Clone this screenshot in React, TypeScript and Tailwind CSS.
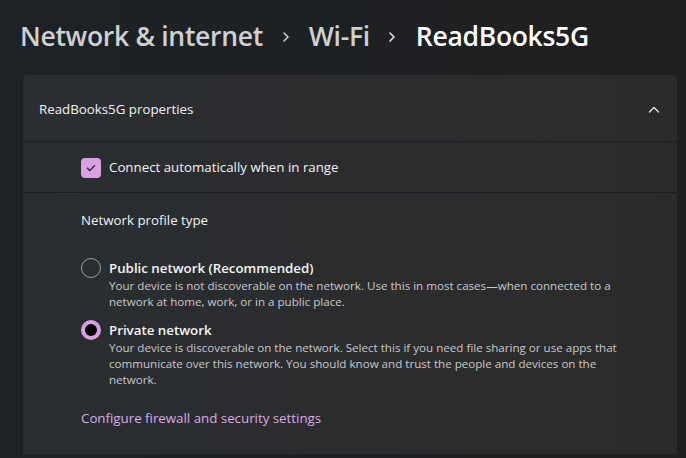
import React from "react";

const Chevron = ({ className }: { className?: string }) => (
  <svg viewBox="0 0 16 16" className={className} fill="none" stroke="currentColor" strokeWidth="1.6" strokeLinecap="round" strokeLinejoin="round">
    <path d="M6 4l4 4-4 4" />
  </svg>
);

const Radio = ({ checked }: { checked?: boolean }) =>
  checked ? (
    <span className="flex h-5 w-5 shrink-0 items-center justify-center rounded-full bg-[#d9a1e0]">
      <span className="h-3 w-3 rounded-full bg-black" />
    </span>
  ) : (
    <span className="h-5 w-5 shrink-0 rounded-full border border-[#9b9d9f]" />
  );

const options = [
  {
    title: "Public network (Recommended)",
    lines: [
      "Your device is not discoverable on the network. Use this in most cases\u2014when connected to a",
      "network at home, work, or in a public place.",
    ],
    checked: false,
  },
  {
    title: "Private network",
    lines: [
      "Your device is discoverable on the network. Select this if you need file sharing or use apps that",
      "communicate over this network. You should know and trust the people and devices on the",
      "network.",
    ],
    checked: true,
  },
];

export default function App() {
  return (
    <div
      className="flex h-[458px] w-[686px] overflow-hidden bg-gradient-to-r from-[#1c2226] via-[#1e2124] to-[#1f1f1f] text-white"
      style={{ fontFamily: '"Segoe UI", "Open Sans", "Noto Sans", sans-serif' }}
    >
      <div className="flex w-[677px] flex-col">
        <div className="flex h-9 items-center pl-5 mt-[19px] text-[26.5px] font-semibold tracking-[-0.3px]">
          <span className="text-[#cfd0d1]">Network &amp; internet</span>
          <Chevron className="mx-[15px] h-4 w-4 text-[#cfd0d1]" />
          <span className="text-[#cfd0d1]">Wi-Fi</span>
          <Chevron className="ml-[14px] mr-[16px] h-4 w-4 text-[#e4e4e4]" />
          <span className="text-white">ReadBooks5G</span>
        </div>

        <div className="ml-[23px] mt-5 flex h-[379px] flex-col overflow-hidden rounded-t-[5px] bg-gradient-to-r from-[#2a2e31] to-[#2b2b2b]">
          <div className="flex h-[67px] items-center justify-between border-b border-[#1c1f22] pl-4 pr-[17px] pt-[4px] text-[13.3px] text-[#f2f2f2]">
            <span>ReadBooks5G properties</span>
            <svg viewBox="0 0 12 8" className="h-2 w-3" fill="none" stroke="#e8e8e8" strokeWidth="1.3" strokeLinecap="round" strokeLinejoin="round">
              <path d="M1.5 6l4.5-4.5L10.5 6" />
            </svg>
          </div>

          <div className="flex h-[51px] items-center gap-2 border-b border-[#1c1f22] pl-[58px] pt-[2px] text-[13.3px] text-[#f2f2f2]">
            <span className="flex h-5 w-5 items-center justify-center rounded-[4px] bg-[#d9a1e0]">
              <svg viewBox="0 0 12 12" className="h-3 w-3" fill="none" stroke="#1a1a1a" strokeWidth="1.3" strokeLinecap="round" strokeLinejoin="round">
                <path d="M2.5 6.3l2.3 2.3 4.8-5" />
              </svg>
            </span>
            <span>Connect automatically when in range</span>
          </div>

          <div className="flex flex-col pl-[58px] pt-[17px]">
            <div className="text-[13.3px] leading-5 text-[#f2f2f2]">Network profile type</div>

            <div className="mt-[28px] flex flex-col gap-[10px]">
              {options.map((o) => (
                <div key={o.title} className="flex gap-2">
                  <Radio checked={o.checked} />
                  <div className="flex flex-col">
                    <span className="text-[13.3px] font-semibold leading-5 text-[#f5f5f5]">{o.title}</span>
                    <div className="text-[11.6px] leading-4 text-[#c8c8c8]">
                      {o.lines.map((l) => (
                        <div key={l} className="whitespace-nowrap">{l}</div>
                      ))}
                    </div>
                  </div>
                </div>
              ))}
            </div>

            <div className="mt-[20px] text-[13.3px] leading-5 text-[#dfa8e6]">Configure firewall and security settings</div>
          </div>
        </div>
      </div>
      <div className="flex-1 bg-[#1f1f1f]" />
    </div>
  );
}
